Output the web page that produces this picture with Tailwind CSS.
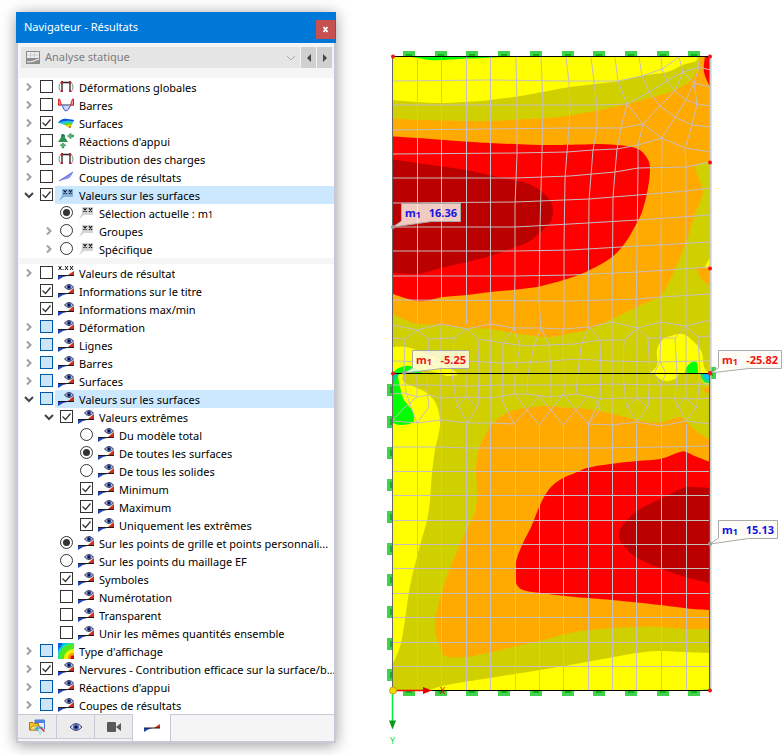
<!DOCTYPE html>
<html lang="fr">
  <head>
    <meta charset="UTF-8" />
    <meta name="viewport" content="width=device-width, initial-scale=1.0" />
    <title>Navigateur - Résultats</title>
    <script src="https://cdn.jsdelivr.net/npm/@tailwindcss/browser@4"></script>
  </head>
  <body class="bg-white text-black font-['Noto_Sans','Open_Sans',sans-serif]">
    <!-- Shared icons -->
    <svg class="hidden">
      <defs>
        <symbol id="i-eye" viewBox="0 0 16 16">
          <path d="M0 11h9L5 12 0 15z" fill="#2346b4" />
          <path d="M10 10l6-5v5z" fill="#d42a10" />
          <path d="M0 10h16v1H0z" fill="#201820" />
          <path d="M6.500 4Q11-1 15.500 4 11 9 6.500 4z" fill="#b9bcdc" stroke="#3a3a60" />
          <circle cx="11" cy="4" r="2.300" fill="#3c5ca8" />
          <circle cx="11" cy="4" r="1.200" fill="#0c1440" />
        </symbol>
        <symbol id="i-values" viewBox="0 0 16 16">
          <path d="M.5 1l3 4m0-4l-3 4M7 1l3 4m0-4L7 5M12 1l3 4m0-4l-3 4" stroke="#111" fill="none" />
          <path d="M4.500 4h1v1h-1z" fill="#111" />
          <path d="M0 11h9L5 12 0 15z" fill="#2346b4" />
          <path d="M10 10l6-4v4z" fill="#d42a10" />
          <path d="M0 10h16v1H0z" fill="#201820" />
        </symbol>
        <symbol id="i-xx" viewBox="0 0 16 16">
          <path d="M4 2h11v8H6l-5 4 3-6z" fill="#d4d4d4" />
          <path d="M5.500 3l3 4m0-4l-3 4M11 3l3 4m0-4l-3 4" stroke="#111" stroke-width="1.200" fill="none" />
        </symbol>
        <symbol id="i-xx-sel" viewBox="0 0 16 16">
          <path d="M4 2h11v8H6l-5 4 3-6z" fill="#8ab4d8" />
          <path d="M5.500 3l3 4m0-4l-3 4M11 3l3 4m0-4l-3 4" stroke="#0c2340" stroke-width="1.200" fill="none" />
        </symbol>
        <symbol id="i-frame" viewBox="0 0 16 16">
          <path d="M3 3Q-1 8 3 13M13 3q4 5 0 10" stroke="#888" fill="none" />
          <path d="M4 13V3.500h8V13" stroke="#222" stroke-width="1.300" fill="none" />
          <path d="M3 2h2v3H3zM11 2h2v3h-2zM3 11h2v2H3zM11 11h2v2h-2z" fill="#b8242c" />
        </symbol>
        <symbol id="i-bars" viewBox="0 0 16 16">
          <path d="M4 8h9q-3 6-5 6T4 8z" fill="#cfd8ff" stroke="#3a50e0" />
          <path d="M0 8h16" stroke="#8090a8" stroke-width="1.500" />
          <path d="M.5 8V2h1l2 6zM15.500 8V2h-1l-2 6z" fill="#ff9a9a" stroke="#e02020" />
        </symbol>
        <symbol id="i-surface" viewBox="0 0 16 16">
          <path d="M0 8Q4 3 9 4l7 1-4 8Q7 9 0 8z" fill="#20c8e8" />
          <path d="M0 8Q4 3 9 4l7 1-.5 1.500Q8 4.500 0 8z" fill="#1450e0" />
          <path d="M5 9.200Q9 7 14.800 8L12 13Q9 10.500 5 9.200z" fill="#60d818" />
          <path d="M8 10.500q3-1.500 6-1L12 13q-2-1.500-4-2.500z" fill="#ffd000" />
          <path d="M10.500 12q1.500-.8 2.500-.8L12 13z" fill="#e01800" />
        </symbol>
        <symbol id="i-support" viewBox="0 0 16 16">
          <circle cx="5" cy="3" r="2" fill="#1c7a40" />
          <path d="M4 3h2l4 6H0z" fill="#2c9350" />
          <path d="M16 4h-3v2L9.500 3 13 0v2h3zM4 15v-2.500H2L5 10l3 2.500H6V15z" fill="#58b878" stroke="#1c7a40" stroke-width=".5" />
        </symbol>
        <symbol id="i-section" viewBox="0 0 16 16">
          <path d="M1 12L15 3q-2 6-6 7z" fill="#8a93f0" />
          <path d="M1 12L15 3" stroke="#5a68dc" />
        </symbol>
        <symbol id="i-display" viewBox="0 0 16 16">
          <path d="M0 0h16v16H0z" fill="#00b4f8" />
          <circle cx="15" cy="15" r="16" fill="#18e0b0" />
          <circle cx="15" cy="15" r="14" fill="#50e820" />
          <circle cx="15" cy="15" r="9" fill="#f0f000" />
          <circle cx="15" cy="15" r="5" fill="#ff9800" />
          <circle cx="15" cy="15" r="2.500" fill="#d00808" />
          <path d="M0 0h4v2L0 7z" fill="#1060e8" />
        </symbol>
      </defs>
    </svg>

    <div class="flex items-start">
      <aside class="ml-4 mt-3 w-80 shrink-0 border-2 border-t-0 border-[#c8c8d6] bg-[#f5f5f5] shadow-[0_2px_14px_rgba(0,0,0,0.4)]">
        <header class="-mx-0.5 flex h-[31px] items-center justify-between bg-[#0078d7] pl-2">
          <h1 class="text-[11px] text-white">Navigateur - Résultats</h1>
          <button type="button" aria-label="Fermer" class="mt-1 mr-px grid h-[19px] w-[19px] place-items-center bg-[#c75050]">
            <svg class="h-[7px] w-[7px]" viewBox="0 0 7 7"><path d="M1.500 1l4 5M5.500 1l-4 5" stroke="#fff" stroke-width="1.800" /></svg>
          </button>
        </header>

        <div class="flex h-[35px] items-start gap-px pt-1 pl-[3px] pr-0.5">
          <div class="flex h-[21px] flex-1 items-center bg-[#e5e5e5] pl-1">
            <svg class="h-4 w-4" viewBox="0 0 16 16">
              <path d="M1 1h14v13H1z" fill="#8d8d8d" />
              <path d="M2 2h12v6H2z" fill="#ececec" />
              <path d="M2 5h12M5.500 2v6M9.500 2v6" stroke="#c4c4c4" stroke-width=".7" />
              <path d="M2 12q6 0 12-3" stroke="#eee" stroke-width="1.200" fill="none" />
            </svg>
            <select aria-label="Type d'analyse" disabled class="ml-1 flex-1 appearance-none text-[11px] text-[#7d7d7d]">
              <option>Analyse statique</option>
            </select>
            <svg class="mr-1 h-2 w-2.5" viewBox="0 0 10 8"><path d="M1 2l4 4 4-4" fill="none" stroke="#aaa" /></svg>
          </div>
          <button type="button" aria-label="Précédent" class="grid h-[21px] w-[15px] place-items-center bg-[#d0d0d0]">
            <svg class="h-2 w-1" viewBox="0 0 4 8"><path d="M4 0v8L0 4z" fill="#444" /></svg>
          </button>
          <button type="button" aria-label="Suivant" class="grid h-[21px] w-[15px] place-items-center bg-[#d0d0d0]">
            <svg class="h-2 w-1" viewBox="0 0 4 8"><path d="M0 0v8l4-4z" fill="#444" /></svg>
          </button>
        </div>

        <ul id="results-tree" class="ml-px bg-white"></ul>
        <ul id="display-tree" class="mt-1.5 ml-px bg-white"></ul>

        <nav class="flex h-[27px] items-start border-t border-[#c8c8d6]">
          <button type="button" aria-label="Données" class="grid h-6 w-[39px] place-items-center border-r border-b border-[#c8c8d6] bg-[#ececec]">
            <svg class="h-4 w-4" viewBox="0 0 16 16">
              <path d="M6 1h9.500v9H6z" fill="#e8eefc" stroke="#5078d0" />
              <path d="M6 1h10v3H6z" fill="#5080e0" />
              <path d="M.5 3.500H4l1 1h4.500V11h-9z" fill="#f6c62a" stroke="#a87808" />
              <path d="M1 11l2-4h8l-2 4z" fill="#ffe070" stroke="#a87808" stroke-width=".7" />
              <path d="M5 10q5-5 10-1l-4 7q-1-5-6-6z" fill="#48a8e0" />
              <path d="M9 10l6-1-4 7z" fill="#c8e8f0" />
              <path d="M12 8l4 4-1 1-4-4z" fill="#d83820" />
            </svg>
          </button>
          <button type="button" aria-label="Affichage" class="grid h-6 w-[38px] place-items-center border-r border-b border-[#c8c8d6] bg-[#ececec]">
            <svg class="h-3 w-3.5" viewBox="0 0 14 12">
              <path d="M1 6q6-7 12 0-6 7-12 0z" fill="#dcdcf0" stroke="#3a3a68" />
              <circle cx="7" cy="6" r="3" fill="#4a68b8" />
              <circle cx="7" cy="6" r="1.600" fill="#0c1240" />
            </svg>
          </button>
          <button type="button" aria-label="Vues" class="grid h-6 w-[37px] place-items-center border-b border-[#c8c8d6] bg-[#ececec]">
            <svg class="h-3 w-3.5" viewBox="0 0 14 12"><path d="M0 2q0-1 1-1h7q1 0 1 1v8q0 1-1 1H1q-1 0-1-1zM9 6l5-4v8z" fill="#595959" /></svg>
          </button>
          <button type="button" aria-label="Résultats" class="-mt-px grid h-[27px] w-[39px] place-items-center border-r border-l border-[#c8c8d6] bg-white">
            <svg class="h-2.5 w-4" viewBox="0 0 16 10">
              <path d="M0 5h9L5 6 0 9z" fill="#2346b4" />
              <path d="M10 5l6-4v4z" fill="#d42a10" />
              <path d="M0 4.500h16v1H0z" fill="#201820" />
            </svg>
          </button>
        </nav>
      </aside>

      <main class="ml-10 min-w-0 flex-1">
        <svg id="model" class="h-auto w-full" viewBox="376 0 406 755" role="img" aria-label="Moments m1 sur les surfaces">
          <defs>
            <clipPath id="plate"><path d="M393 56h317v635H393z" /></clipPath>
          </defs>
          <g id="supports"></g>
          <g id="bands" clip-path="url(#plate)"></g>
          <g id="mesh" clip-path="url(#plate)" fill="none" stroke="#c6bec0"></g>

          <path d="M392.500 56v635" stroke="#666" />
          <path d="M710.500 57v634" stroke="#c8c8c8" stroke-width="2" />
          <path d="M709.500 374v317" stroke="#555" />
          <path d="M393 56.500h317M393 373.500h317M393 690.500h317" stroke="#000" />
          <g id="nodes" fill="#f5101c"></g>

          <g id="callouts" class="text-[11px] font-bold"></g>

          <path d="M396 690.500h28" stroke="#f00" stroke-width="1.500" />
          <path d="M423 687l9 3.500-9 3.500z" fill="#e00000" />
          <path d="M392.500 693v28" stroke="#00f040" stroke-width="1.500" />
          <path d="M389 720.500h7l-3.500 9z" fill="#089a18" />
          <circle cx="393" cy="690.500" r="3.500" fill="#f5d800" stroke="#b09000" stroke-width=".7" />
          <text x="440" y="694" class="fill-[#f00000] text-[9px]">X</text>
          <text x="390" y="744" class="fill-[#00e040] text-[9px]">Y</text>
        </svg>
      </main>
    </div>

    <script>
      // [level, toggle, control, icon, label, selected]
      // toggle: ">" closed, "v" open; control: box, checked, partial, or radio group name (+ for the active one)
      const resultRows = [
        [0, ">", "box", "frame", "Déformations globales"],
        [0, ">", "box", "bars", "Barres"],
        [0, ">", "checked", "surface", "Surfaces"],
        [0, ">", "box", "support", "Réactions d'appui"],
        [0, ">", "box", "frame", "Distribution des charges"],
        [0, ">", "box", "section", "Coupes de résultats"],
        [0, "v", "checked", "xx-sel", "Valeurs sur les surfaces", true],
        [1, "", "values+", "xx", 'Sélection actuelle : m<span class="text-[9px]">1</span>'],
        [1, ">", "values", "xx", "Groupes"],
        [1, ">", "values", "xx", "Spécifique"],
      ];

      const displayRows = [
        [0, ">", "box", "values", "Valeurs de résultat"],
        [0, "", "checked", "eye", "Informations sur le titre"],
        [0, "", "checked", "eye", "Informations max/min"],
        [0, ">", "partial", "eye", "Déformation"],
        [0, ">", "partial", "eye", "Lignes"],
        [0, ">", "partial", "eye", "Barres"],
        [0, ">", "partial", "eye", "Surfaces"],
        [0, "v", "partial", "eye", "Valeurs sur les surfaces", true],
        [1, "v", "checked", "eye", "Valeurs extrêmes"],
        [2, "", "scope", "eye", "Du modèle total"],
        [2, "", "scope+", "eye", "De toutes les surfaces"],
        [2, "", "scope", "eye", "De tous les solides"],
        [2, "", "checked", "eye", "Minimum"],
        [2, "", "checked", "eye", "Maximum"],
        [2, "", "checked", "eye", "Uniquement les extrêmes"],
        [1, "", "points+", "eye", "Sur les points de grille et points personnali..."],
        [1, "", "points", "eye", "Sur les points du maillage EF"],
        [1, "", "checked", "eye", "Symboles"],
        [1, "", "box", "eye", "Numérotation"],
        [1, "", "box", "eye", "Transparent"],
        [1, "", "box", "eye", "Unir les mêmes quantités ensemble"],
        [0, ">", "partial", "display", "Type d'affichage"],
        [0, ">", "checked", "eye", "Nervures - Contribution efficace sur la surface/b..."],
        [0, ">", "partial", "eye", "Réactions d'appui"],
        [0, ">", "partial", "eye", "Coupes de résultats"],
      ];

      const indents = ["pl-0", "pl-5", "pl-10"];

      function toggleButton(kind) {
        if (!kind) return '<span class="w-5 shrink-0"></span>';
        const open = kind === "v";
        const path = open
          ? '<path d="M1 3l4 4 4-4" fill="none" stroke="#444" stroke-width="2" />'
          : '<path d="M3 1.500L6.500 5 3 8.500" fill="none" stroke="#a0a0a0" stroke-width="2" />';
        return `<button type="button" aria-label="${open ? "Réduire" : "Développer"}" class="flex w-[19px] mr-px shrink-0 justify-center pt-1">
          <svg class="h-2.5 w-2.5" viewBox="0 0 10 10">${path}</svg></button>`;
      }

      function control(kind, id) {
        if (["box", "checked", "partial"].includes(kind)) {
          const colours = kind === "partial" ? "border-[#0058a8] bg-[#cce4f7]" : "border-[#333] bg-white";
          return `<span class="mt-0.5 ml-px grid h-[13px] w-[13px] shrink-0">
            <input type="checkbox" id="${id}" ${kind === "checked" ? "checked" : ""} class="peer col-start-1 row-start-1 h-[13px] w-[13px] appearance-none border ${colours}" />
            <svg class="pointer-events-none col-start-1 row-start-1 hidden h-[13px] w-[13px] peer-checked:block" viewBox="0 0 13 13"><path d="M2.500 6.500l3 3 5-6" fill="none" stroke="#333" stroke-width="1.200" /></svg>
          </span>`;
        }
        const active = kind.endsWith("+");
        return `<span class="mt-0.5 ml-px grid h-[13px] w-[13px] shrink-0">
          <input type="radio" name="${kind.replace("+", "")}" id="${id}" ${active ? "checked" : ""} class="peer col-start-1 row-start-1 h-[13px] w-[13px] appearance-none rounded-full border border-[#333] bg-white" />
          <svg class="pointer-events-none col-start-1 row-start-1 hidden h-[13px] w-[13px] peer-checked:block" viewBox="0 0 13 13"><circle cx="6.500" cy="6.500" r="3.500" fill="#333" /></svg>
        </span>`;
      }

      function renderTree(listId, rows) {
        document.getElementById(listId).innerHTML = rows
          .map(([level, toggle, kind, icon, label, selected], i) => {
            const id = `${listId}-${i}`;
            return `<li class="flex h-[18px] ${indents[level]}">
              ${toggleButton(toggle)}${control(kind, id)}
              <label for="${id}" class="ml-0.5 flex min-w-0 flex-1 gap-[5px] pl-[3px] ${selected ? "bg-[#cce8ff]" : ""}">
                <svg class="mt-px h-4 w-4 shrink-0"><use href="#i-${icon}" /></svg>
                <span class="mt-px overflow-hidden text-[11px] leading-[18px] whitespace-nowrap">${label}</span>
              </label>
            </li>`;
          })
          .join("");
      }

      renderTree("results-tree", resultRows);
      renderTree("display-tree", displayRows);

      // Smooth open curve through the points, closed by straight lines through "rest"
      function area(points, rest) {
        const p = points.trim().split(" ").map((s) => s.split(",").map(Number));
        let d = `M${p[0]}`;
        for (let i = 0; i < p.length - 1; i++) {
          const a = p[i - 1] || p[i], b = p[i], c = p[i + 1], e = p[i + 2] || c;
          d += `C${b[0] + (c[0] - a[0]) / 6},${b[1] + (c[1] - a[1]) / 6} ${c[0] - (e[0] - b[0]) / 6},${c[1] - (e[1] - b[1]) / 6} ${c}`;
        }
        return d + (rest ? "L" + rest : "") + "Z";
      }

      const yellow = "#ffff00", olive = "#d0d000", orange = "#ffaa00", red = "#ff0000", dark = "#bb0000", green = "#00ff00";
      const bands = [
        [orange, "393,56 710,56", "710,373 393,373"],
        // upper plate
        [olive, "393,118.500 417,120 465,121 490,121 517,119.500 548,118 570,115.500 595,111 627,104 650,98 673,91 690,81 698,68 701,56", "393,56"],
        [yellow, "393,100 417,102 441,103 465,102 490,100 517,96.500 548,91 570,87 595,84 620,81 641,76 667,72 683,65 696,61 699,56", "393,56"],
        [green, "406,56 430,60 441,60 470,58.500 524,56", ""],
        [red, "393,136.500 417,138 465,141.500 490,143 540,145 580,144.500 600,144 622,145.500 638,149 647,158 650,168 648,188 642,212 633,230 625,243 612,257 590,270 570,278 553,283 537,287 513,290 490,292 467,295 443,297 428,300.500 417,301 405,298 393,294", ""],
        [dark, "393,159.500 417,163 466,170 493,176 513,180 529,184 542,192 551,202 553,212 551,221 543,230 530,241 513,248 490,256 467,262 441,268 427,272 417,274 393,273", ""],
        [olive, "393,314 405,320 417,324 441,325 467,328 490,329 513,333 547,337 567,334 587,330 612,319 637,307 660,296 670,280 678,262 686,243 694,217 702,196 702,187 697,174 695,165", "710,161 710,374 393,374"],
        [orange, "696,268 699,275 703,281 710,285", "710,268"],
        [yellow, "710,258 704,268", "710,268"],
        [red, "705,56 704,72 710,87", "710,56"],
        // lower plate
        [olive, "393,373 710,373", "710,691 393,691"],
        [orange, "710,440 695,430 685,420 678,417 660,422.500 637,420 610,413 587,409 567,408 547,406 520,409 503,415 490,427 484,437 479,449 476,467 477,493 475,512 468,527 460,545 450,568 443,588 438,607 435,620 436,635 440,645 442,653 448,657 467,657 483,654 513,647 540,641 570,633 590,630 613,628 637,627 662,627 683,629 710,629", ""],
        [red, "710,462 697,457 686,452 680,452 660,459 637,461 610,464 587,468 575,473 563,478 550,488 540,505 532,525 523,543 517,558 515,570 516,583 523,590 540,593 575,597 612,600 660,605 693,609 710,610", ""],
        [dark, "710,488 693,487 683,488 662,498 637,511 623,525 619,535 623,545 637,558 660,568 685,577 710,583", ""],
        [yellow, "426,691 447,685 490,678 540,670 570,665 603,659 637,653 660,651 683,652 710,653", "710,691"],
        [yellow, "393,347 410,348 437,358 447,366 458,374 447,376 439,373 426,371 405,374 404,382 417,388 427,393 435,402 439,413 440,425 438,437 435,450 432,473 430,500 427,520 418,553 410,586 405,620 401,643 397,655 393,663", ""],
        [green, "393,373 397,369 405,366 412,367 422,373 411,374 399,374 400,387 404,400 412,410 414,418 412,423 400,425 393,423", ""],
        ["#00c8a0", "393,374 398,374 395,380 393,386", ""],
        [yellow, "650,373 657,365 657,350 662,340 670,336 683,334 695,343 702,353 704,367 709,374 710,384 703,382 699,374 680,374 677,378 668,381 660,379 655,374", ""],
        [green, "685,373 686,368 692,362 697,363 698,373", ""],
        ["#20e060", "700,374 704,382 710,383", "710,374"],
        ["#00c8f0", "703,374 706,380 710,380", "710,374"],
        [orange, "702,388 710,388 710,393 705,392", ""],
        [green, "690,691 710,689", "710,691"],
      ];
      document.getElementById("bands").innerHTML = bands
        .map(([fill, points, rest]) => `<path d="${area(points, rest)}" fill="${fill}" />`)
        .join("");

      // Finite element mesh
      const columns = [417, 441, 466, 490, 515, 539, 563, 588, 612, 636, 661, 686];
      const lines = [471, 495, 520, 544, 568, 593, 617, 642, 666].map((y) => `393,${y}.5 710,${y}.5`);
      columns.forEach((x) => lines.push(`${x}.5,424 ${x}.5,691`));
      [417, 441, 466, 490].forEach((x) => lines.push(`${x}.5,57 ${x}.5,324`));
      lines.push(
        "393,447 441,447 466,448 600,448 660,447 710,446",
        "516,57 517,105 517,155 515,205 515,275 514,328",
        "541,57 543,105 542,152 540,227 539,300 541,328",
        "566,57 569,82 570,105 569,128 567,152 565,178 564,245 564,329",
        "591,57 594,82 597,105 597,128 593,150 591,175 589,200 588,327",
        "615,57 618,81 627,104 621,128 617,149 615,172 613,197 612,322",
        "393,81 490,80 566,81 618,81 642,76 662,69 679,57",
        "393,105 490,105 597,105 627,104 649,92 667,81 683,72 699,67 710,70",
        "393,130 490,129 569,128 597,128 621,128 643,124 660,106 675,91 683,72",
        "393,154 515,153 567,152 593,150 617,149 638,145 662,138 675,117 686,100 694,83 699,67 697,57",
        "393,178 515,178 570,176 615,172 638,168 686,167 710,162",
        "393,203 515,202 589,199 638,195 686,191 710,188",
        "393,227 515,227 570,224 638,220 710,215",
        "393,251 515,251 570,250 638,246 710,242",
        "393,276 515,276 570,275 638,272 710,267",
        "393,300 570,301 638,299 661,297 710,294",
        "639,57 642,76 649,92 660,106 675,117 692,125 710,127",
        "627,104 643,124 662,138 685,148 710,152",
        "661,57 662,69 667,81 675,91 686,100 697,104 710,106",
        "679,57 683,72 694,83 697,104 692,125 685,148 686,167 686,326",
        "694,83 710,87",
        "643,124 638,145 638,168 637,245 636,328",
        "662,138 661,245 661,322",
        // transition around the middle edge
        "393,325 417,330 441,324 467,329 490,324 514,328 541,328 563,329 589,327 612,322 637,328 661,322 686,326 710,320",
        "393,338 405,339 417,330 429,339 454,338 467,329 478,339 492,341 503,343 527,346 549,345 574,344 600,340 624,340 637,328 648,338 675,338 686,326 698,337 710,336",
        "393,361 429,362 466,361 503,363 540,362 575,359 612,361 660,362 698,361 710,361",
        "393,385 429,385 466,386 503,385 540,385 575,385 612,384 660,385 710,384",
        "393,394 405,393 417,397 429,395 441,398 466,397 490,398 515,394 527,394 550,397 576,394 600,399 624,398 650,398 673,398 698,399 710,398",
        "393,421 417,423 441,420 467,423 490,423 514,424",
        "588,424 612,425 637,422 661,426 686,421 710,424",
        "514,424 527,410 539,425 551,410 563,425 576,410 588,424 600,410 594,396",
        "502,400 514,424 M514,393 527,410 539,396 551,410 563,394 576,410 588,396",
        "405,339 404,373 406,393 417,423 429,407 427,390 429,339",
        "417,373 417,397 404,408 393,420",
        "441,324 441,424",
        "454,338 452,373 456,400 467,423 478,406 479,373 478,339",
        "466,361 466,397 456,408 M466,397 478,408",
        "490,324 491,424",
        "514,328 503,343 502,400",
        "514,328 520,346 515,373 515,394",
        "541,328 534,346 528,373 527,394",
        "541,328 549,345 551,373 551,397",
        "563,329 564,394",
        "589,327 581,346 578,373 576,394",
        "589,327 600,340 601,373 600,400 588,424",
        "612,322 612,424",
        "637,328 624,340 623,373 626,404 637,422 648,406 650,373 648,338",
        "637,328 637,398 626,408 M637,398 648,408",
        "661,322 660,362 654,373 661,385 661,424 M660,362 666,373 661,385",
        "675,338 677,373 675,400 686,421 697,406 700,373 698,337",
        "686,326 686,398 675,408 M686,398 697,408"
      );
      document.getElementById("mesh").innerHTML = lines
        .map((points) => `<path d="M${points}" />`)
        .join("");

      // Line supports, the darker core sits against the plate edge
      const block = (x, y, w, h, cx, cy, cw, ch) =>
        `<rect x="${x}" y="${y}" width="${w}" height="${h}" fill="#3fd24a" /><rect x="${x + cx}" y="${y + cy}" width="${cw}" height="${ch}" fill="#10b41c" />`;
      let supports = block(708, 367, 8, 12, 2, 3, 3, 6);
      for (let i = 0; i < 10; i++) {
        const x = Math.round(403 + i * 31.7);
        supports += block(x, 51, 12, 5, 3, 3, 6, 2) + block(x, 691, 12, 5, 3, 0, 6, 2);
        supports += block(387, Math.round(384 + i * 31.7), 6, 12, 3, 3, 3, 6);
      }
      document.getElementById("supports").innerHTML = supports;

      document.getElementById("nodes").innerHTML = [[393, 56], [710, 56], [710, 162], [710, 268], [710, 373], [393, 373], [710, 690]]
        .map(([x, y]) => `<circle cx="${x}" cy="${y + 0.5}" r="2" />`)
        .join("");

      // Extreme value labels: box, anchor point, value
      const callouts = [
        { x: 401, y: 203, w: 59, h: 18, to: [393, 227], value: "16.36", fill: "#1414e6" },
        { x: 412, y: 350, w: 57, h: 18, to: [404, 373], value: "-5.25", fill: "#f01414" },
        { x: 718, y: 350, w: 63, h: 18, to: [710, 373], value: "-25.82", fill: "#f01414" },
        { x: 718, y: 520, w: 59, h: 18, to: [710, 544], value: "15.13", fill: "#1414e6" },
      ];
      document.getElementById("callouts").innerHTML = callouts
        .map(({ x, y, w, h, to, value, fill }) => `
          <path d="M${x + 0.5} ${y + 0.5}h${w}v${h}h${30 - w}L${to}L${x + 0.5} ${y + h}z" fill="#fffcf2" fill-opacity=".8" stroke="#aaa" />
          <circle cx="${to[0]}" cy="${to[1]}" r="2" fill="${value === "-25.82" ? "#f01414" : "#999"}" />
          <text x="${x + 4}" y="${y + 14}" fill="${fill}">m<tspan class="text-[9px]" dy="1">1</tspan></text>
          <text x="${x + w - 3}" y="${y + 14}" fill="${fill}" text-anchor="end">${value}</text>`)
        .join("");
    </script>
  </body>
</html>
